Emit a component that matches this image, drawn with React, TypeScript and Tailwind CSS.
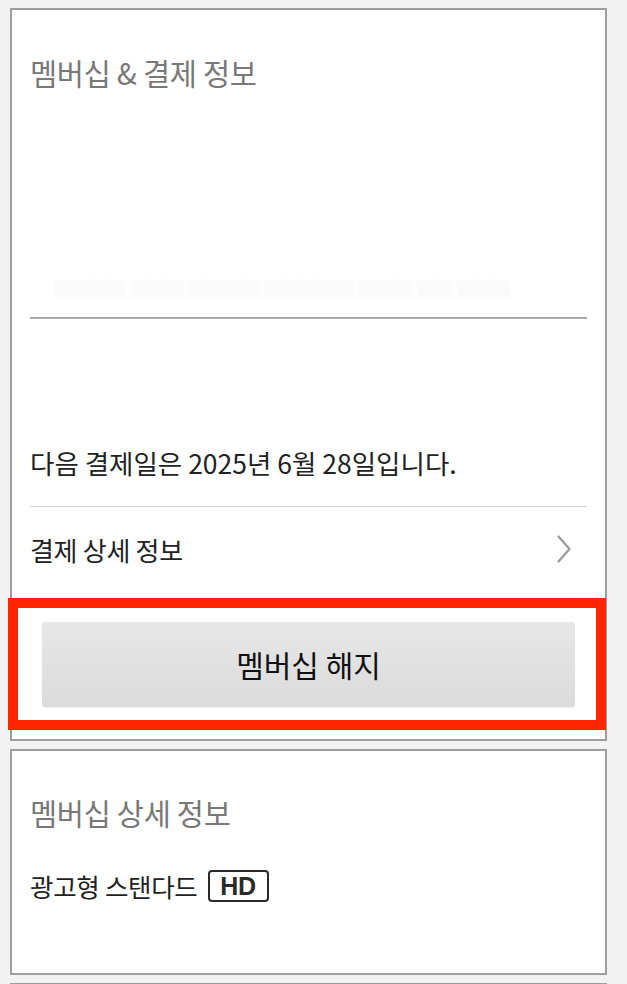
import React from 'react';

const font = { fontFamily: '"Noto Sans CJK KR", "Noto Sans", sans-serif' };

function Chevron() {
  return (
    <svg width="14" height="28" viewBox="0 0 14 28" fill="none">
      <path d="M1.5 1.5 L12.5 14 L1.5 26.5" stroke="#9a9a9a" strokeWidth="2.2" strokeLinecap="round" strokeLinejoin="round" />
    </svg>
  );
}

function HdBadge() {
  return (
    <span
      className="ml-[10px] inline-flex h-[32px] w-[61px] items-center justify-center rounded-[4px] border-2 border-[#2a2a2a] pt-px text-[25px] font-bold leading-none text-[#2a2a2a]"
      style={{ fontFamily: '"Liberation Sans", Arial, sans-serif' }}
    >
      HD
    </span>
  );
}

export default function App() {
  return (
    <div className="min-h-screen bg-[#f2f2f2] px-[10px] pt-[8px]" style={font}>
      {/* membership & billing */}
      <section className="w-[597px] border-2 border-[#9d9d9d] bg-white">
        <div className="px-[18px]">
          <h2 className="pt-[45px] text-[29.5px] leading-[34px] tracking-[-0.3px] text-[#787878]">멤버십 &amp; 결제 정보</h2>
          <div className="mt-[184px] h-[30px] overflow-hidden">
            <p className="select-none whitespace-nowrap text-[18px] leading-[30px] text-[#fafafa] blur-[1.5px]">
              ·· ████ ███ ████ █████ ███ ██ ███
            </p>
          </div>
          <div className="mt-[14px] h-[2px] bg-[#a9a9a9]" />
          <p className="mt-[129px] text-[26.5px] leading-[30px] text-[#222]">다음 결제일은 2025년 6월 28일입니다.</p>
          <div className="mt-[28px] h-px bg-[#d2d2d2]" />
          <div className="flex h-[84px] items-center justify-between pr-[16px]">
            <span className="text-[26px] tracking-[-0.3px] text-[#222]">결제 상세 정보</span>
            <Chevron />
          </div>
        </div>
        <div className="relative px-[30px] pb-[32px] pt-[31px]">
          <button className="flex h-[85px] w-full items-center justify-center rounded-[3px] bg-gradient-to-b from-[#e7e7e7] to-[#dbdbdb] text-[30px] text-[#111] shadow-[0_1px_1px_rgba(0,0,0,0.08)]">
            멤버십 해지
          </button>
          <div className="pointer-events-none absolute -left-[4px] -right-px bottom-[9px] top-[7px] border-[10px] border-[#ff2600]" />
        </div>
      </section>

      {/* membership details */}
      <section className="mt-[8px] w-[597px] border-2 border-[#9d9d9d] bg-white px-[18px] pb-[71px]">
        <h2 className="pt-[44px] text-[29.5px] leading-[34px] tracking-[-0.3px] text-[#787878]">멤버십 상세 정보</h2>
        <div className="mt-[41px] flex h-[32px] items-center text-[25.5px] tracking-[-0.3px] text-[#222]">
          <span>광고형 스탠다드</span>
          <HdBadge />
        </div>
      </section>

      <section className="mt-[8px] h-[60px] w-[597px] border-2 border-[#9d9d9d] bg-white" />
    </div>
  );
}
